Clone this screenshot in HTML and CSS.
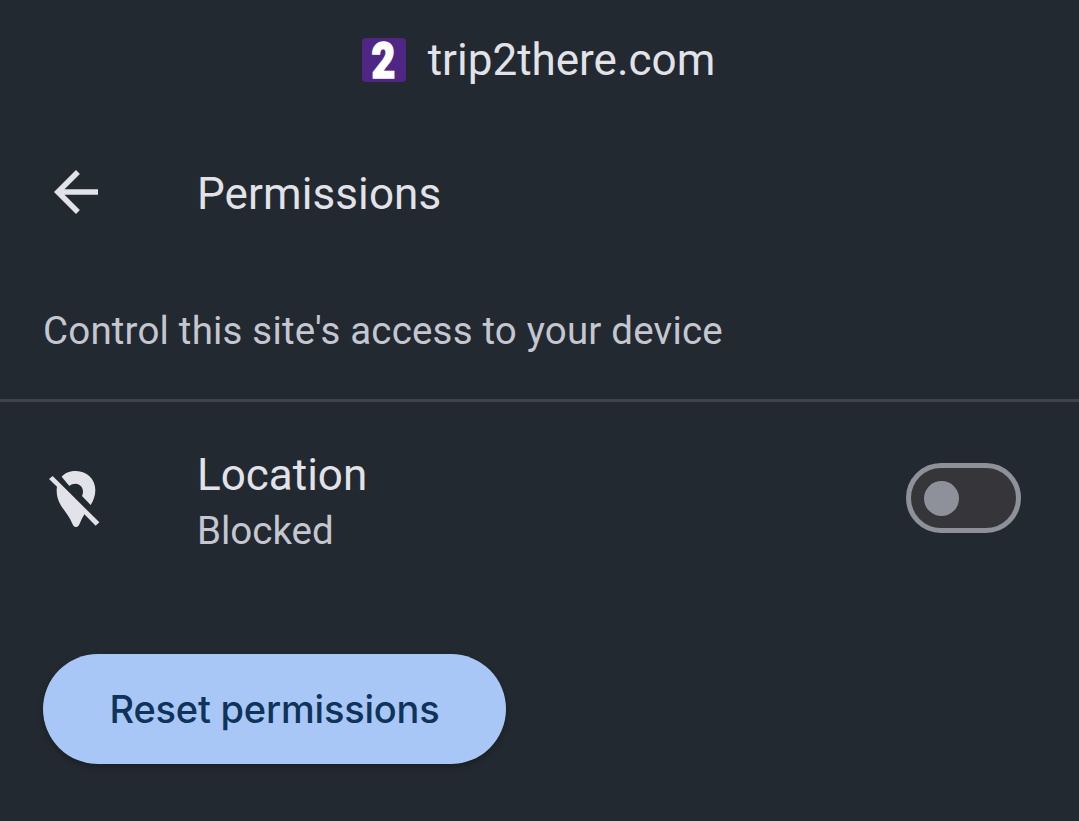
FILE: index.html
```html
<!DOCTYPE html>
<html lang="en">
<head>
<meta charset="utf-8">
<title>Permissions</title>
<link rel="stylesheet" href="styles.css">
</head>
<body>
<main class="sheet">
  <header class="site">
    <span class="favicon"><span class="favicon-digit">2</span></span>
    <span class="site-name">trip2there.com</span>
  </header>
  <div class="toolbar">
    <svg class="icon" viewBox="0 0 24 24"><path d="M20 11H7.83l5.59-5.59L12 4l-8 8 8 8 1.41-1.41L7.83 13H20v-2z"/></svg>
    <h1 class="title">Permissions</h1>
  </div>
  <p class="description">Control this site's access to your device</p>
  <section class="permission">
    <svg class="icon" viewBox="9 15 198 198"><path d="M65 50C76 38 91 33 108 33c33 0 58 25 58 57 0 16-5 31-14 45L126 108c2-4 3-8 3-13 0-13-9-24-22-24-8 0-14 2-19 7zM38 48L178 187l-11 10-34-34c-4 8-9 16-13 26-3 7-5 12-12 12s-9-5-12-12C85 158 50 136 50 92q0-7 1-12L27 57z"/></svg>
    <div class="permission-text">
      <div class="permission-name">Location</div>
      <div class="permission-state">Blocked</div>
    </div>
    <button class="toggle" type="button" role="switch" aria-checked="false" aria-label="Location"><span class="knob"></span></button>
  </section>
  <button class="reset" type="button">Reset permissions</button>
</main>
</body>
</html>
```

FILE: styles.css
```css
* { box-sizing: border-box; }
body {
  margin: 0;
  background: #232930;
  color: #e2e2e9;
  font-family: Roboto, sans-serif;
}
.sheet {
  display: flex;
  flex-direction: column;
  height: 821px;
  overflow: hidden;
}
.site {
  display: flex;
  justify-content: center;
  align-items: center;
  gap: 22px;
  height: 120px;
  padding-right: 2px;
  font-size: 44px;
}
.favicon {
  display: flex;
  justify-content: center;
  align-items: center;
  width: 44px;
  height: 44px;
  border-radius: 4px;
  background: #4f2683;
  color: #fff;
}
.favicon-digit {
  padding-top: 2px;
  font-size: 50px;
  font-weight: 900;
  line-height: 44px;
  transform: scaleX(.82);
  -webkit-text-stroke: 1.6px #fff;
}
.site-name { line-height: 52px; }
.toolbar {
  display: flex;
  align-items: center;
  gap: 88px;
  height: 144px;
  padding-left: 43px;
}
.icon {
  flex: none;
  width: 66px;
  height: 66px;
  fill: #e2e2e9;
}
.title {
  margin: 4px 0 0;
  font-size: 44px;
  font-weight: 400;
  line-height: 52px;
  letter-spacing: .1px;
}
.description {
  height: 138px;
  margin: 0;
  padding: 44px 43px 0;
  border-bottom: 3px solid #3f444b;
  color: #c4c6d0;
  font-size: 38.5px;
  line-height: 46px;
  letter-spacing: .18px;
}
.permission {
  display: flex;
  align-items: center;
  gap: 88px;
  height: 192px;
  padding: 0 58px 0 43px;
}
.permission-text { flex: 1; padding-top: 7px; }
.permission-name { font-size: 44px; line-height: 58px; }
.permission-state { color: #c4c6d0; font-size: 38.5px; line-height: 53px; }
.toggle {
  display: flex;
  align-items: center;
  width: 115px;
  height: 70px;
  padding: 0 13px;
  border: 5px solid #8e9199;
  border-radius: 35px;
  background: #35353a;
}
.knob {
  width: 35px;
  height: 35px;
  border-radius: 50%;
  background: #8e9199;
}
.reset {
  width: 463px;
  height: 110px;
  margin: 60px 0 0 43px;
  padding: 0 0 1px;
  border: 0;
  border-radius: 55px;
  background: #a8c7f7;
  box-shadow: 0 3px 6px rgba(0, 0, 0, .25);
  color: #0f3359;
  font: 500 38px/46px Inter, sans-serif;
  letter-spacing: -.2px;
}
```
